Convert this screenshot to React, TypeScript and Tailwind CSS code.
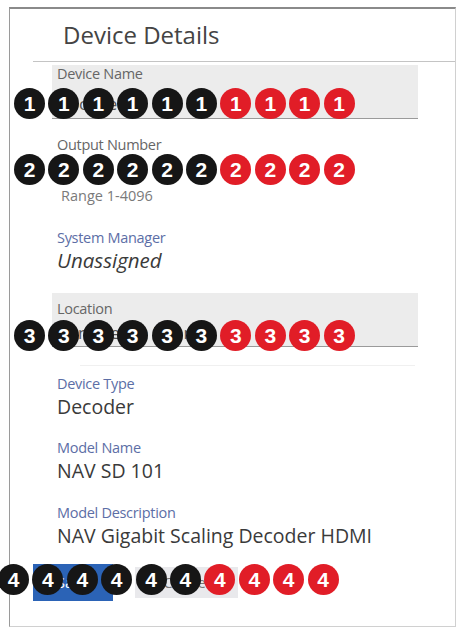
import React from 'react';

const font = { fontFamily: '"Open Sans", "Liberation Sans", sans-serif' };

const Callouts: React.FC<{ n: number; top: string; left: string }> = ({ n, top, left }) => {
    const items = Array.from({ length: 10 }, (_, i) => i);
    return (
        <div className={`absolute flex gap-[3.4px] ${top} ${left}`}>
            {items.map(i => (
                <div
                    key={i}
                    className={`w-[31px] h-[31px] rounded-full flex items-center justify-center text-white text-[21px] font-bold leading-none ${i < 6 ? 'bg-[#161616]' : 'bg-[#e11d27]'}`}
                    style={{ fontFamily: '"Liberation Sans", Arial, sans-serif' }}
                >
                    {n}
                </div>
            ))}
        </div>
    );
};

const Label: React.FC<{ children: React.ReactNode; blue?: boolean; className?: string }> = ({ children, blue, className = '' }) => (
    <div className={`text-[14.5px] leading-[16px] tracking-[-0.3px] ${blue ? 'text-[#5c6ea6]' : 'text-[#666]'} ${className}`}>{children}</div>
);

const Value: React.FC<{ children: React.ReactNode; className?: string }> = ({ children, className = '' }) => (
    <div className={`text-[19.5px] leading-[24px] text-[#3a3a3a] ${className}`}>{children}</div>
);

export default function App() {
    return (
        <div className="w-[459px] h-[629px] bg-white overflow-hidden pt-[7px] pl-[9px]" style={font}>
            <div className="relative w-[447px] h-[620px] border-t-2 border-t-[#8a8a8a] border-l border-l-[#9a9a9a] border-r border-r-[#d0d0d0] border-b border-b-[#d0d0d0]">
                <header className="h-[52px] flex items-center pl-[53px] text-[24px] text-[#444]">
                    Device Details
                </header>
                <div className="ml-[23px] border-t border-[#c4c4c4]" />

                <div className="ml-[42px] mt-[3px] w-[366px] h-[54px] bg-[#ececec] border-b border-[#9a9a9a] px-[5px] pt-[1px]">
                    <Label>Device Name</Label>
                    <div className="text-[17px] text-[#555] mt-[9px]">Decoder-01</div>
                </div>

                <div className="ml-[47px] mt-[18px]">
                    <Label>Output Number</Label>
                    <div className="h-[34px] text-[17px] text-[#555] pt-[5px] pl-[2px]">1</div>
                    <div className="text-[14.5px] leading-[18px] text-[#7a7a7a] pl-[4px]">Range 1-4096</div>
                    <Label blue className="mt-[25px]">System Manager</Label>
                    <Value className="italic mt-[2px] text-[20.5px]">Unassigned</Value>
                </div>

                <div className="ml-[42px] mt-[21px] w-[366px] h-[54px] bg-[#ececec] border-b border-[#9a9a9a] px-[5px] pt-[8px]">
                    <Label>Location</Label>
                    <div className="text-[17px] text-[#555] mt-[3px]">Conference Room</div>
                </div>
                <div className="ml-[70px] mr-[40px] mt-[18px] border-t border-[#f0f0f0]" />

                <div className="ml-[47px] mt-[10px]">
                    <Label blue>Device Type</Label>
                    <Value className="mt-[3px]">Decoder</Value>
                    <Label blue className="mt-[21px]">Model Name</Label>
                    <Value className="mt-[3px]">NAV SD 101</Value>
                    <Label blue className="mt-[22px]">Model Description</Label>
                    <Value className="mt-[3px]">NAV Gigabit Scaling Decoder HDMI</Value>
                </div>

                <div className="flex items-center ml-[23px] mt-[16px] gap-[22px]">
                    <button className="w-[80px] h-[37px] bg-[#2b63b6] text-white text-[15px]">Save</button>
                    <button className="w-[103px] h-[31px] bg-[#e9e9ec] text-[#777] text-[15px]">Cancel</button>
                </div>

                <Callouts n={1} top="top-[79px]" left="left-[4px]" />
                <Callouts n={2} top="top-[145px]" left="left-[4px]" />
                <Callouts n={3} top="top-[311px]" left="left-[4px]" />
                <Callouts n={4} top="top-[555px]" left="left-[-12px]" />
            </div>
        </div>
    );
}
